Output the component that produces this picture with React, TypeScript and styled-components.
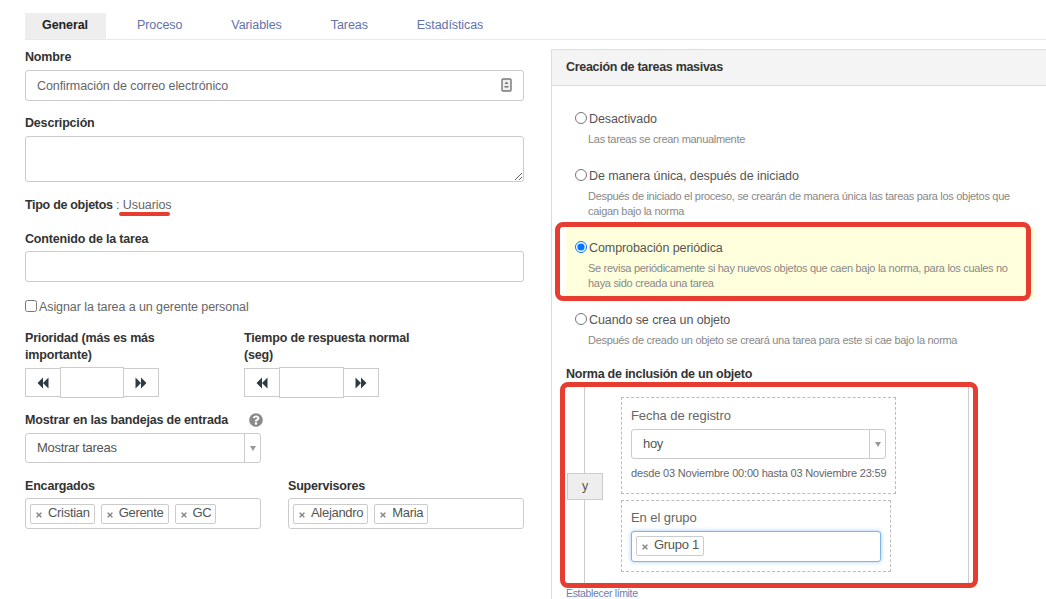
import React from 'react';
import styled, { createGlobalStyle } from 'styled-components';
import { FaQuestionCircle, FaTimes } from 'react-icons/fa';

const Global = createGlobalStyle`
  html, body { margin: 0; padding: 0; height: 599px; overflow: hidden; background: #fff; }
  body { font-family: "Liberation Sans", Arial, sans-serif; font-size: 12.5px; letter-spacing: -0.08px; color: #333; }
  * { box-sizing: border-box; }
`;

const Page = styled.div`
  width: 1046px; height: 599px; overflow: hidden; padding: 13px 0 0 25px;
`;
const Tabs = styled.nav`
  display: flex; height: 27px; border-bottom: 1px solid #e8e8e8;
`;
const Tab = styled.div<{ $active?: boolean }>`
  padding: 5px 18px 0 17px; margin-right: 14px; height: 26px; line-height: 15px;
  background: ${p => (p.$active ? '#eeeeee' : 'transparent')};
  color: ${p => (p.$active ? '#222' : '#5f73ad')};
  font-weight: ${p => (p.$active ? 700 : 400)};
`;
const Columns = styled.div`
  display: grid; grid-template-columns: 499px 520px; column-gap: 27px;
`;
const Left = styled.div`
  display: flex; flex-direction: column; padding-top: 9px;
`;
const Label = styled.div`
  font-weight: 700; color: #333; line-height: 17px; letter-spacing: -0.18px;
`;
const SpacedLabel = styled(Label)<{ $top: number }>`
  margin-top: ${p => p.$top}px;
`;
const Field = styled.div`
  position: relative; display: flex; align-items: center; height: 31px; margin-top: 4px;
  border: 1px solid #ccc; border-radius: 3px; padding-left: 11px; color: #666;
`;
const ContentField = styled(Field)`
  margin-top: 3px;
`;
const DocIcon = styled.svg`
  position: absolute; right: 11px; top: 7px;
`;
const TextArea = styled.textarea`
  display: block; width: 100%; height: 46px; margin: 4px 0 0; border: 1px solid #ccc; border-radius: 3px;
  outline: none; resize: vertical; font: inherit;
`;
const TypeRow = styled.div`
  position: relative; margin-top: 15px; line-height: 17px; color: #666;
`;
const Underline = styled.span`
  position: absolute; left: 94px; top: 15px; width: 51px; height: 4px; border-radius: 2px; background: #e63d30;
`;
const Bold = styled.b`
  color: #333; letter-spacing: -0.3px;
`;
const CheckRow = styled.label`
  display: flex; align-items: center; gap: 2px; margin-top: 16px; height: 17px; color: #666;
`;
const CheckBox = styled.input`
  margin: 0 0 2px; width: 12px; height: 12px;
`;
const TwoSpin = styled.div`
  display: flex; margin-top: 15px;
`;
const SpinCol = styled.div`
  width: 219px;
`;
const SpinLabel = styled(Label)`
  width: 175px; height: 34px;
`;
const Spinner = styled.div`
  display: flex; align-items: center; margin-top: 3px; height: 31px;
`;
const SpinBtn = styled.div`
  display: flex; align-items: center; justify-content: center; width: 36px; height: 29px;
  border: 1px solid #ccc; background: #fff; color: #2f3a45;
`;
const SpinInput = styled.div<{ $w: number }>`
  width: ${p => p.$w}px; height: 31px; border: 1px solid #ccc; margin: 0 -1px; background: #fff; position: relative;
`;
const HelpRow = styled.div`
  display: flex; align-items: center; margin-top: 14px; height: 17px;
`;
const HelpIcon = styled.span`
  display: flex; margin-left: 21px; margin-top: -2px; color: #8a8a8a; font-size: 14px;
`;
const Select = styled.div<{ $w: number }>`
  display: flex; justify-content: space-between; align-items: stretch; width: ${p => p.$w}px; height: 30px;
  margin-top: 4px; border: 1px solid #ccc; border-radius: 3px; color: #555;
`;
const SelectText = styled.div`
  padding-left: 11px; line-height: 27px; font-size: 13px; letter-spacing: -0.3px;
`;
const Caret = styled.div`
  display: flex; align-items: center; justify-content: center; width: 16px; border-left: 1px solid #ccc;
  &::after { content: ''; border: 3.5px solid transparent; border-top: 5px solid #999; margin-top: 4px; }
`;
const People = styled.div`
  display: grid; grid-template-columns: 236px 236px; column-gap: 27px; margin-top: 15px;
`;
const Tags = styled.div<{ $focus?: boolean; $w?: number }>`
  display: flex; gap: 6px; height: 31px; padding: 5px 4px 0; margin-top: 3px;
  width: ${p => (p.$w ? `${p.$w}px` : 'auto')};
  border: 1px solid ${p => (p.$focus ? '#7db5ea' : '#ccc')}; border-radius: 3px; background: #fff;
  box-shadow: ${p => (p.$focus ? '0 0 4px rgba(100,170,240,.6)' : 'none')};
`;
const Tag = styled.span`
  display: inline-flex; align-items: center; height: 20px; padding: 0 4px 2px; border: 1px solid #ccc; border-radius: 2px;
  color: #555; font-size: 13px; letter-spacing: -0.3px; line-height: 16px; background: #fff;
`;
const TagX = styled(FaTimes)`
  width: 8px; height: 8px; color: #888; margin-right: 5px; margin-top: 4px;
`;

const Panel = styled.section`
  margin-top: 9px; border: 1px solid #ddd; border-right: 0; border-bottom: 0; height: 560px; position: relative;
`;
const PanelHead = styled.div`
  height: 36px; padding: 0 14px; line-height: 34px; background: #f4f4f4; border-bottom: 1px solid #ddd;
  font-weight: 700; color: #333; letter-spacing: -0.3px;
`;
const Options = styled.div`
  padding-top: 24px;
`;
const Option = styled.div`
  margin-left: 14px; width: 470px; padding: 0 0 0 9px; min-height: 72px;
  &:first-child { min-height: 57px; }
  &:last-child { min-height: 0; }
`;
const HighlightedOption = styled(Option)`
  margin-top: -11px; margin-bottom: 11px; padding-top: 11px; background: #ffffdd;
`;
const OptRow = styled.label`
  display: flex; align-items: center; gap: 2px; height: 18px; color: #555;
`;
const Radio = styled.input`
  margin: 0 0 2px; width: 12px; height: 12px;
`;
const Hint = styled.div`
  margin: 4px 0 0 13px; font-size: 11px; letter-spacing: -0.3px; line-height: 15px; color: #888; width: 432px;
`;
const RuleTitle = styled.div`
  margin: 18px 0 0 14px; font-weight: 700; color: #333; line-height: 17px; letter-spacing: -0.25px;
`;
const Rule = styled.div`
  display: flex; margin: 3px 0 0 14px; width: 403px; height: 197px; border-right: 1px solid #ccc; position: relative;
`;
const YBox = styled.div`
  position: absolute; left: 1px; top: 87px; width: 36px; height: 27px; line-height: 24px; text-align: center;
  background: #eee; border: 1px solid #ccc; color: #555;
`;
const Rail = styled.div`
  width: 19px; border-right: 1px solid #ccc;
`;
const Conds = styled.div`
  padding: 11px 0 0 36px; display: flex; flex-direction: column; gap: 6px;
`;
const Cond = styled.div<{ $w: number; $h: number; $pad: number }>`
  width: ${p => p.$w}px; height: ${p => p.$h}px; padding: ${p => p.$pad}px 9px 0; border: 1px dashed #bbb; color: #666;
`;
const CondLabel = styled.div`
  line-height: 17px; font-size: 13px;
`;
const CondSelect = styled(Select)`
  margin-top: 5px;
`;
const DateText = styled.div`
  margin-top: 7px; font-size: 11px; letter-spacing: -0.18px; line-height: 15px; color: #666; white-space: nowrap;
`;
const GroupTags = styled(Tags)`
  margin-top: 5px; padding-top: 4px;
`;
const LimitLink = styled.div`
  margin: 4px 0 0 14px; font-size: 10.5px; letter-spacing: -0.35px; line-height: 12px; color: #6b7fb0;
`;
const RedFrame = styled.div<{ $l: number; $t: number; $w: number; $h: number }>`
  position: absolute; left: ${p => p.$l}px; top: ${p => p.$t}px; width: ${p => p.$w}px; height: ${p => p.$h}px;
  border: 5px solid #e63d30; border-radius: 8px; pointer-events: none;
`;

const Back = () => (
  <svg width="12" height="12" viewBox="0 0 12 12" fill="currentColor"><path d="M6 .5v11L.5 6zM11.5 .5v11L6 6z" /></svg>
);
const Fwd = () => (
  <svg width="12" height="12" viewBox="0 0 12 12" fill="currentColor"><path d="M.5 .5v11L6 6zM6 .5v11L11.5 6z" /></svg>
);

export default function App() {
  return (
    <Page>
      <Global />
      <Tabs>
        <Tab $active>General</Tab>
        <Tab>Proceso</Tab>
        <Tab>Variables</Tab>
        <Tab>Tareas</Tab>
        <Tab>Estadísticas</Tab>
      </Tabs>
      <Columns>
        <Left>
          <Label>Nombre</Label>
          <Field>
            Confirmación de correo electrónico
            <DocIcon width="11" height="14" viewBox="0 0 11 14">
              <rect x="1" y="1" width="9" height="12" rx="1" fill="#eee" stroke="#777" strokeWidth="1.4" />
              <path d="M5.5 3.5l2 2.5h-4zM3.5 8h4v1.5h-4z" fill="#777" />
            </DocIcon>
          </Field>
          <SpacedLabel $top={14}>Descripción</SpacedLabel>
          <TextArea />
          <TypeRow>
            <Bold>Tipo de objetos</Bold> : Usuarios
            <Underline />
          </TypeRow>
          <SpacedLabel $top={17}>Contenido de la tarea</SpacedLabel>
          <ContentField />
          <CheckRow>
            <CheckBox type="checkbox" />
            Asignar la tarea a un gerente personal
          </CheckRow>
          <TwoSpin>
            <SpinCol>
              <SpinLabel>Prioridad (más es más importante)</SpinLabel>
              <Spinner>
                <SpinBtn><Back /></SpinBtn>
                <SpinInput $w={64} />
                <SpinBtn><Fwd /></SpinBtn>
              </Spinner>
            </SpinCol>
            <SpinCol>
              <SpinLabel>Tiempo de respuesta normal (seg)</SpinLabel>
              <Spinner>
                <SpinBtn><Back /></SpinBtn>
                <SpinInput $w={65} />
                <SpinBtn><Fwd /></SpinBtn>
              </Spinner>
            </SpinCol>
          </TwoSpin>
          <HelpRow>
            <Label>Mostrar en las bandejas de entrada</Label>
            <HelpIcon><FaQuestionCircle /></HelpIcon>
          </HelpRow>
          <Select $w={236}>
            <SelectText>Mostrar tareas</SelectText>
            <Caret />
          </Select>
          <People>
            <div>
              <Label>Encargados</Label>
              <Tags>
                <Tag><TagX />Cristian</Tag>
                <Tag><TagX />Gerente</Tag>
                <Tag><TagX />GC</Tag>
              </Tags>
            </div>
            <div>
              <Label>Supervisores</Label>
              <Tags>
                <Tag><TagX />Alejandro</Tag>
                <Tag><TagX />Maria</Tag>
              </Tags>
            </div>
          </People>
        </Left>
        <Panel>
          <PanelHead>Creación de tareas masivas</PanelHead>
          <Options>
            <Option>
              <OptRow><Radio type="radio" name="m" />Desactivado</OptRow>
              <Hint>Las tareas se crean manualmente</Hint>
            </Option>
            <Option>
              <OptRow><Radio type="radio" name="m" />De manera única, después de iniciado</OptRow>
              <Hint>Después de iniciado el proceso, se crearán de manera única las tareas para los objetos que caigan bajo la norma</Hint>
            </Option>
            <HighlightedOption>
              <OptRow><Radio type="radio" name="m" defaultChecked />Comprobación periódica</OptRow>
              <Hint>Se revisa periódicamente si hay nuevos objetos que caen bajo la norma, para los cuales no haya sido creada una tarea</Hint>
            </HighlightedOption>
            <Option>
              <OptRow><Radio type="radio" name="m" />Cuando se crea un objeto</OptRow>
              <Hint>Después de creado un objeto se creará una tarea para este si cae bajo la norma</Hint>
            </Option>
          </Options>
          <RuleTitle>Norma de inclusión de un objeto</RuleTitle>
          <Rule>
            <Rail />
            <YBox>y</YBox>
            <Conds>
              <Cond $w={275} $h={97} $pad={9}>
                <CondLabel>Fecha de registro</CondLabel>
                <CondSelect $w={255}>
                  <SelectText>hoy</SelectText>
                  <Caret />
                </CondSelect>
                <DateText>desde 03 Noviembre 00:00 hasta 03 Noviembre 23:59</DateText>
              </Cond>
              <Cond $w={270} $h={72} $pad={8}>
                <CondLabel>En el grupo</CondLabel>
                <GroupTags $focus $w={250}>
                  <Tag><TagX />Grupo 1</Tag>
                </GroupTags>
              </Cond>
            </Conds>
          </Rule>
          <LimitLink>Establecer límite</LimitLink>
          <RedFrame $l={3} $t={172} $w={476} $h={79} />
          <RedFrame $l={8} $t={332} $w={418} $h={206} />
        </Panel>
      </Columns>
    </Page>
  );
}
